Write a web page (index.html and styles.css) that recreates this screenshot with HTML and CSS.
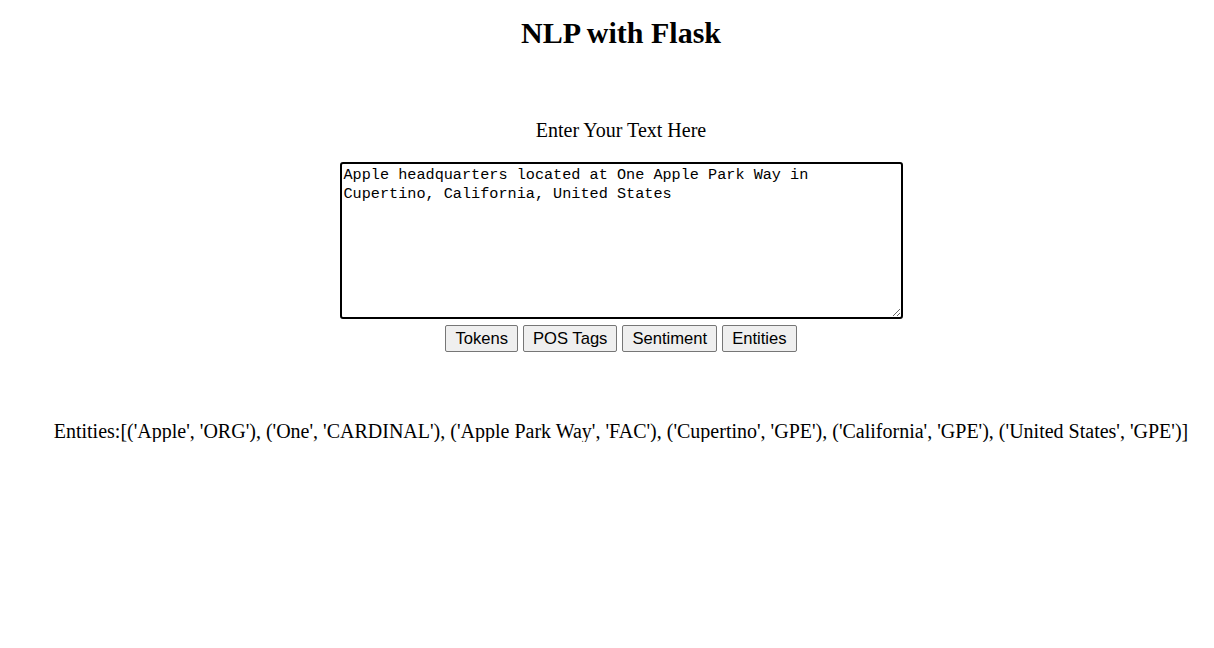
FILE: index.html
```html
<!DOCTYPE html>
<html>
<head>
<meta charset="utf-8">
<title>NLP with Flask</title>
<link rel="stylesheet" href="styles.css">
</head>
<body>
<div class="page">
  <h1 class="title">NLP with Flask</h1>
  <form class="form">
    <p class="label">Enter Your Text Here</p>
    <textarea class="input" spellcheck="false">Apple headquarters located at One Apple Park Way in
Cupertino, California, United States</textarea>
    <div class="buttons">
      <button type="button" class="btn">Tokens</button>
      <button type="button" class="btn">POS Tags</button>
      <button type="button" class="btn">Sentiment</button>
      <button type="button" class="btn">Entities</button>
    </div>
  </form>
  <p class="result">Entities:[('Apple', 'ORG'), ('One', 'CARDINAL'), ('Apple Park Way', 'FAC'), ('Cupertino', 'GPE'), ('California', 'GPE'), ('United States', 'GPE')]</p>
</div>
</body>
</html>
```

FILE: styles.css
```css
html { overflow: hidden; background: #fff; }
body {
  margin: 0;
  font-family: "Liberation Serif", "Times New Roman", serif;
  color: #000;
}
.page {
  width: 1226px;
  margin: 0 8px;
  text-align: center;
}
.title {
  font-size: 30px;
  font-weight: bold;
  margin: 0;
  padding-top: 15px;
  line-height: 36px;
}
.form {
  margin: 0;
  padding-top: 68px;
  display: flex;
  flex-direction: column;
  align-items: center;
}
.label {
  font-size: 20px;
  line-height: 22px;
  margin: 0 0 21px 0;
}
.input {
  width: 563px;
  height: 157px;
  box-sizing: border-box;
  border: 2px solid #000;
  border-radius: 3px;
  padding: 2px 2px;
  font-family: "Liberation Mono", "DejaVu Sans Mono", monospace;
  font-size: 15.2px;
  line-height: 19px;
  color: #000;
  resize: both;
  margin: 0;
  outline: none;
}
.buttons {
  display: flex;
  gap: 5px;
  margin-top: 6px;
}
.btn {
  font-family: "Liberation Sans", Arial, sans-serif;
  font-size: 16.6px;
  height: 27px;
  padding: 0 9px;
  background: #efefef;
  border: 1px solid #767676;
  border-radius: 2px;
  color: #000;
}
.result {
  font-size: 20px;
  line-height: 22px;
  margin: 68px 0 0 0;
  white-space: nowrap;
}
```
